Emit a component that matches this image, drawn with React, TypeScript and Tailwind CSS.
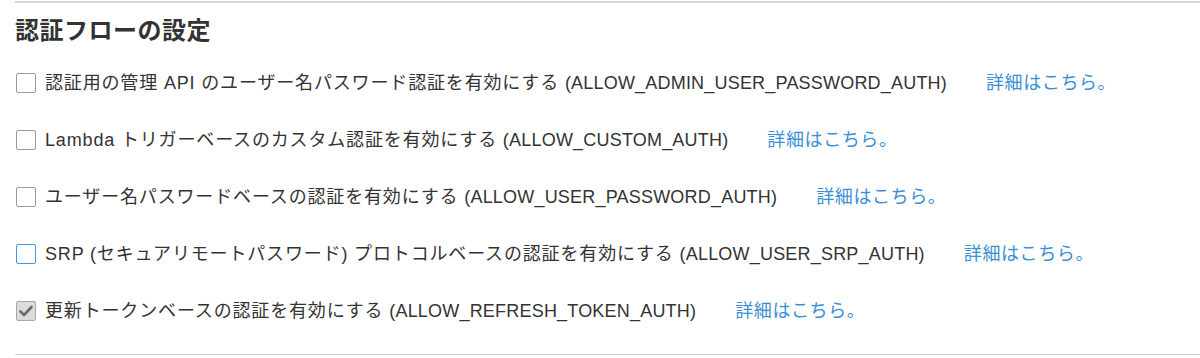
import React from "react";

const rows = [
  { jp: "認証用の管理 API のユーザー名パスワード認証を有効にする ", en: "(ALLOW_ADMIN_USER_PASSWORD_AUTH)", state: "off" },
  { jp: "Lambda トリガーベースのカスタム認証を有効にする ", en: "(ALLOW_CUSTOM_AUTH)", state: "off" },
  { jp: "ユーザー名パスワードベースの認証を有効にする ", en: "(ALLOW_USER_PASSWORD_AUTH)", state: "off" },
  { jp: "SRP (セキュアリモートパスワード) プロトコルベースの認証を有効にする ", en: "(ALLOW_USER_SRP_AUTH)", state: "focus" },
  { jp: "更新トークンベースの認証を有効にする ", en: "(ALLOW_REFRESH_TOKEN_AUTH)", state: "checked" },
];

function Box({ state }: { state: string }) {
  if (state === "checked") {
    return (
      <div className="w-[20px] h-[20px] rounded-[2px] border border-[#a8a8a8] bg-[#dcdcdc] flex items-center justify-center shrink-0">
        <svg width="14" height="12" viewBox="0 0 14 12">
          <path d="M1.5 6.5 L5 10 L12.5 2" fill="none" stroke="#6b6b6b" strokeWidth="2.6" strokeLinecap="round" strokeLinejoin="round" />
        </svg>
      </div>
    );
  }
  if (state === "focus") {
    return <div className="w-[20px] h-[20px] rounded-[2px] border-[1.5px] border-[#4a95dc] bg-white shrink-0" />;
  }
  return <div className="w-[20px] h-[20px] rounded-[2px] border border-[#9a9a9a] bg-white shrink-0" />;
}

export default function App() {
  return (
    <div
      className="w-[1200px] h-[358px] bg-white text-[#333] overflow-hidden"
      style={{ fontFamily: '"Liberation Sans", "Noto Sans CJK JP", sans-serif' }}
    >
      <div className="ml-[15px] mt-[1px] border-t-2 border-[#d6d6d6]" />
      <h2 className="ml-[15px] mt-[14px] text-[24px] leading-[28px] tracking-[0.5px] font-bold text-[#333]">認証フローの設定</h2>
      <div className="flex flex-col gap-[33px] mt-[26px] ml-[16px]">
        {rows.map((r, i) => (
          <div key={i} className="flex items-center h-[24px]">
            <Box state={r.state} />
            <span className="ml-[9px] text-[18px] leading-[24px] whitespace-pre">
              <span className="tracking-[0.84px]">{r.jp}</span>
              <span className="tracking-[0.2px]">{r.en}</span>
            </span>
            <a className="ml-[39px] text-[18px] leading-[24px] tracking-[0.6px] text-[#3b8fd6] whitespace-nowrap">詳細はこちら。</a>
          </div>
        ))}
      </div>
      <div className="ml-[15px] mt-[31px] border-t border-[#cccccc]" />
    </div>
  );
}
